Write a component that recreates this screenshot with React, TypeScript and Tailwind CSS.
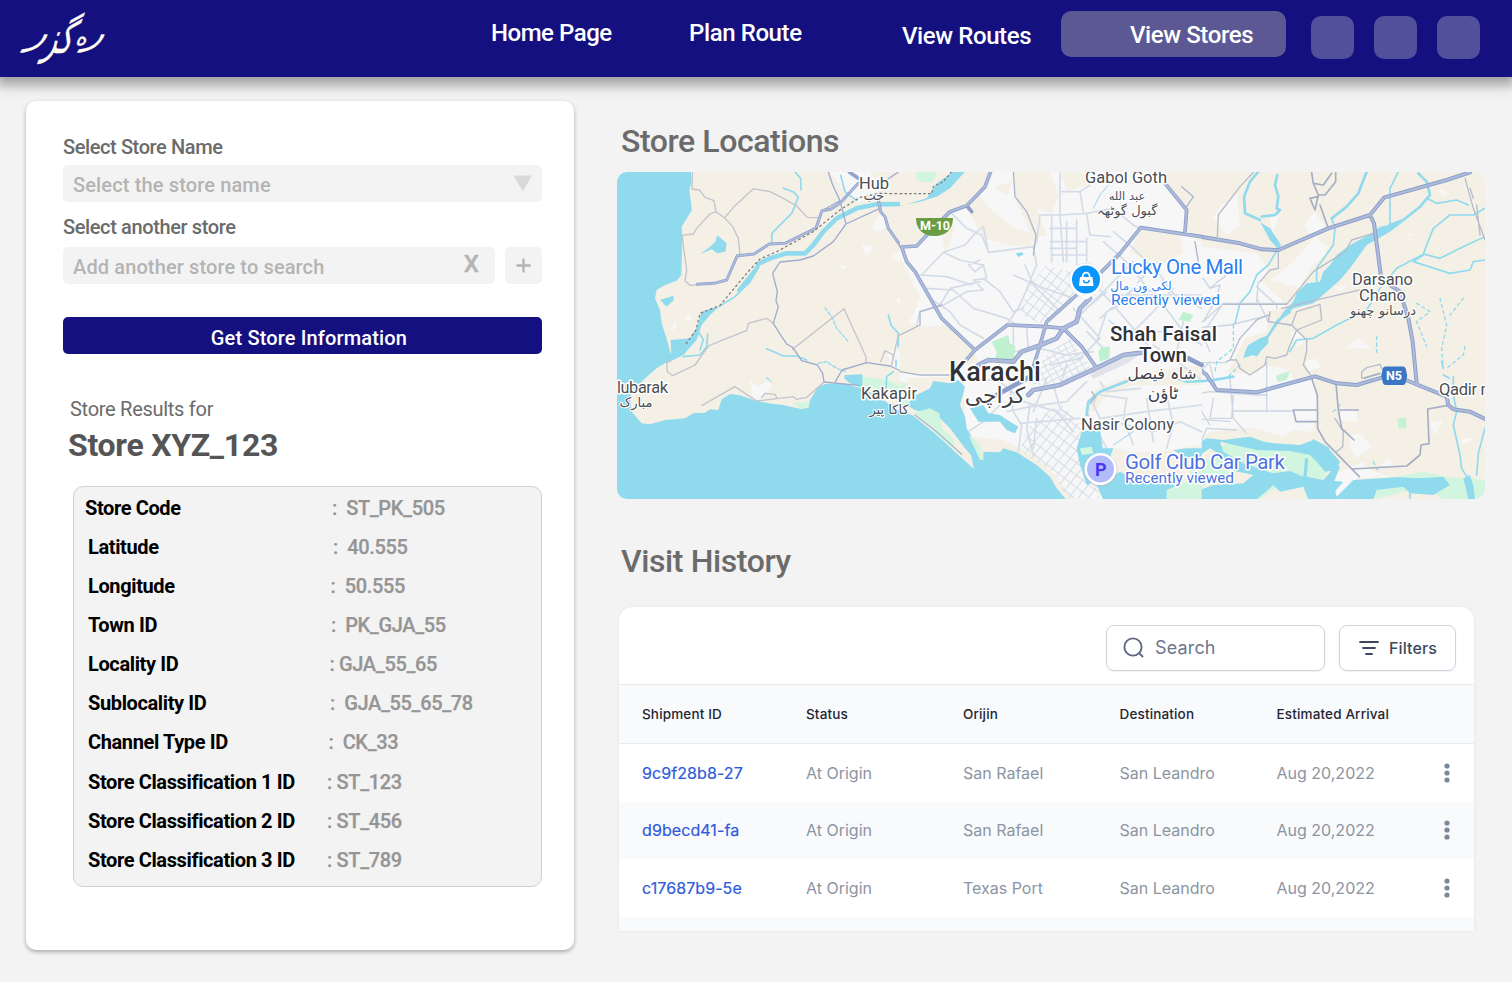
import React from "react";

const details = [
  { label: "Store Code", value: ":  ST_PK_505", pad: "pl-[11px]", at: "w-[258px]" },
  { label: "Latitude", value: ":  40.555", pad: "pl-[14px]", at: "w-[259px]" },
  { label: "Longitude", value: ":  50.555", pad: "pl-[14px]", at: "w-[256.500px]" },
  { label: "Town ID", value: ":  PK_GJA_55", pad: "pl-[14px]", at: "w-[257px]" },
  { label: "Locality ID", value: ": GJA_55_65", pad: "pl-[14px]", at: "w-[255.500px]" },
  { label: "Sublocality ID", value: ":  GJA_55_65_78", pad: "pl-[14px]", at: "w-[256px]" },
  { label: "Channel Type ID", value: ":  CK_33", pad: "pl-[14px]", at: "w-[254.500px]" },
  { label: "Store Classification 1 ID", value: ": ST_123", pad: "pl-[14px]", at: "w-[253px]" },
  { label: "Store Classification 2 ID", value: ": ST_456", pad: "pl-[14px]", at: "w-[253px]" },
  { label: "Store Classification 3 ID", value: ": ST_789", pad: "pl-[14px]", at: "w-[253px]" },
];

const visits = [
  ["9c9f28b8-27", "At Origin", "San Rafael", "San Leandro", "Aug 20,2022"],
  ["d9becd41-fa", "At Origin", "San Rafael", "San Leandro", "Aug 20,2022"],
  ["c17687b9-5e", "At Origin", "Texas Port", "San Leandro", "Aug 20,2022"],
];

const SEA = "#90daee";
const LAND = "#f5f0e5";
const CITY = "#f7f7f8";
const PARK = "#d2f5df";

function Logo() {
  return (
    <svg width="90" height="70" viewBox="0 0 90 70" className="block overflow-visible" fill="#fffdf0">
      <g fontFamily="'DejaVu Sans', sans-serif" fontSize="30" direction="rtl" textAnchor="start" stroke="#fffdf0" strokeWidth="0.300">
        <text transform="translate(79 40) skewX(-34) scale(1.15 1.15)">ر</text>
        <text transform="translate(64 41) skewX(-20) scale(0.72 0.8)">ه</text>
        <text transform="translate(48 49) skewX(-20) scale(0.9 1.5)">گز</text>
        <text transform="translate(22 40) skewX(-34) scale(1.15 1.15)">ر</text>
      </g>
    </svg>
  );
}

function Header() {
  return (
    <header className="relative z-10 flex h-[77px] items-start bg-[#151080] text-[24px] leading-[28px] font-medium tracking-[-0.4px] whitespace-nowrap text-white shadow-[0_4px_12px_4px_rgba(0,0,0,0.36)]">
      <div className="w-[491px] pt-[4px] pl-[22px]">
        <Logo />
      </div>
      <a className="mt-[19px] w-[198px] tracking-[-0.48px]">Home Page</a>
      <a className="mt-[19px] w-[213px]">Plan Route</a>
      <a className="mt-[22px] w-[159px]">View Routes</a>
      <a className="mt-[11px] h-[46px] w-[225px] rounded-[10px] bg-[#5b5893] pt-[10px] pl-[69px]">View Stores</a>
      <div className="mt-[16px] ml-[25px] flex gap-[20px]">
        <span className="size-[43px] rounded-[10px] bg-[#52509b]" />
        <span className="size-[43px] rounded-[10px] bg-[#52509b]" />
        <span className="size-[43px] rounded-[10px] bg-[#52509b]" />
      </div>
    </header>
  );
}

function StorePanel() {
  return (
    <section className="h-[849px] w-[548px] rounded-[10px] bg-white px-[32px] pt-[34px] pl-[37px] shadow-[0_2px_4px_rgba(0,0,0,0.3)]">
      <p className="h-[30px] text-[20px] leading-[24px] font-medium tracking-[-0.4px] text-[#6b6b6b]">Select Store Name</p>
      <div className="flex h-[37px] items-center justify-between rounded-[5px] bg-[#f3f3f3] pt-[2px] pr-[9px] pl-[10px] text-[20px] font-medium tracking-[0.14px] text-[#b4b4b4]">
        <span>Select the store name</span>
        <svg width="20" height="17" viewBox="0 0 20 17" className="mb-[3px]">
          <path d="M0.5 0.5h18.5L9.8 16.5z" fill="#d9d9d9" />
        </svg>
      </div>
      <p className="h-[45px] pt-[13px] text-[20px] leading-[24px] font-medium tracking-[-0.38px] text-[#6b6b6b]">Select another store</p>
      <div className="flex gap-[10px]">
        <div className="flex h-[37px] w-[432px] items-center justify-between rounded-[5px] bg-[#f3f3f3] pt-[2px] pr-[16px] pl-[10px] text-[20px] font-medium tracking-[0.12px] text-[#b4b4b4]">
          <span>Add another store to search</span>
          <span className="mb-[5px] text-[24px] tracking-normal [-webkit-text-stroke:0.4px_#b4b4b4]">X</span>
        </div>
        <div className="flex size-[37px] items-center justify-center rounded-[5px] bg-[#f3f3f3]">
          <svg width="15" height="15" viewBox="0 0 15 15" stroke="#b4b4b4" strokeWidth="2.4">
            <path d="M7.5 0.5v14M0.5 7.5h14" />
          </svg>
        </div>
      </div>
      <button className="mt-[33px] block h-[37px] w-[479px] rounded-[5px] bg-[#151080] pt-[4px] pl-[13px] text-center text-[20px] font-medium tracking-[0.15px] text-white">
        Get Store Information
      </button>
      <p className="mt-[43px] pl-[7px] text-[20px] leading-[24px] tracking-[-0.28px] text-[#6b6b6b]">Store Results for</p>
      <h1 className="mt-[4px] pl-[5px] text-[32px] leading-[40px] font-bold tracking-[-0.28px] text-[#555]">Store XYZ_123</h1>
      <dl className="mt-[21px] ml-[10px] h-[401px] w-[469px] rounded-[10px] border border-[#cfcfcf] bg-[#f3f3f3] pt-[1px] text-[20px] whitespace-pre">
        {details.map((d) => (
          <div key={d.label} className="flex h-[39.15px] items-center">
            <dt className={`${d.at} ${d.pad} shrink-0 font-bold tracking-[-0.38px] text-black`}>{d.label}</dt>
            <dd className="font-medium tracking-[-0.35px] text-[#959595] [-webkit-text-stroke:0.25px_#959595]">{d.value}</dd>
          </div>
        ))}
      </dl>
    </section>
  );
}

function MapWest() {
  return (
    <g transform="translate(610 110) scale(0.33333)" fill="none" strokeLinejoin="round" strokeLinecap="round">
      <path fill={SEA} d="M15 180H242L245 215 238 240 246 300 215 350 217 390 214 495 200 512 165 525 140 540 135 565 150 600 155 640 168 680 182 730 200 730 190 748 172 755 140 775 100 810 60 860 65 905 95 940 120 943 165 930 225 925 250 910 285 908 300 898 325 900 335 868 360 852 390 856 440 873 475 880 520 885 555 893 575 897 595 893 600 870 625 830 645 822 700 820 735 830 760 835 820 870 875 908V1180H15Z" />
      <path fill={CITY} d="M660 186H780L810 240 790 260 740 280 700 240ZM785 355L820 300 835 345 810 365ZM755 402L790 410 775 435 765 430ZM845 440L870 420 900 465 890 475ZM182 665L195 632 203 648ZM222 622L238 610 248 628 235 634ZM688 466L710 465 700 482ZM857 572L875 560 890 574 870 584ZM418 805L440 830 475 812 485 830 450 870 430 865ZM830 730L860 715 900 760V800L850 775ZM870 320L892 322 875 332Z" />
      <path fill={PARK} d="M755 800L830 808 875 830 860 845 755 836ZM545 880L598 875 590 893 572 895Z" />
      <path fill={SEA} d="M270 433L300 410 316 395 322 376 350 400 346 425 322 430 305 418ZM150 570L190 557 192 570 170 590ZM705 795L757 793V833L720 820 702 805ZM182 690L240 685 262 650 275 605 330 588 300 615 275 645 260 690 220 735 185 752ZM380 540L440 465 450 470 420 520 385 548Z" />
      <g stroke={SEA}>
        <path strokeWidth="14" d="M445 462L480 445 530 430 585 430 610 405 640 365 680 325 740 295 800 283 905 282" />
        <path strokeWidth="5" d="M450 460L415 520 375 560 330 588M220 740L270 735 290 710 293 672M262 660L280 690 270 720M555 186L572 205 573 240M520 235L550 245 565 262 545 310 505 350 486 370 485 405M692 196L705 245 740 272M835 615L843 645 865 670 865 710M470 716L520 738 560 738 590 750M828 835L830 800 850 785M858 750V770" />
        <path strokeWidth="4" strokeDasharray="10 6" d="M645 594L665 620 680 655 715 695M625 760L650 755 680 775 705 785M470 803L484 814" />
      </g>
      <g stroke="#c2c3ce" strokeWidth="4">
        <path d="M247 186L246 237M246 237L268 240 285 262 312 272 318 305 345 325 368 350 385 385 390 435M345 322L372 290 430 236 480 245 520 265 560 288 592 322 625 323M318 305L300 312 260 355 250 372 216 376M216 376L230 480 225 512 240 526 262 524M490 640L470 625 415 640 410 662 350 685 295 708 255 765 188 797 172 785 170 758 185 752M275 887L375 830 440 873 550 860M455 862L465 850 495 853 500 862M550 716L702 596 768 740 768 760M548 715L550 720" />
        <path d="M812 755L825 722 850 735 845 765M870 672L900 660M845 765L865 675M550 860L560 868 590 862 640 818" />
      </g>
      <g stroke="#9facce" strokeWidth="4">
        <path d="M655 186L668 225 690 272 708 342 808 296M708 342L670 395 610 438 570 450 510 456 488 490 502 545 498 572 505 590 490 640 515 680 530 702 548 712 575 752 622 765 638 790 642 816M642 816L745 826M676 815L696 780 770 758 840 768 900 795M690 272L640 300M830 210L865 186" />
      </g>
      <g stroke="#91a3cd">
        <path strokeWidth="9" d="M262 523L312 520 350 510 382 437 432 432 478 402 525 400 618 354 636 302 662 298 690 280 745 220M805 270L812 305 825 320 835 355 875 412 890 455 903 472" />
        <path strokeWidth="11" d="M718 186L745 205M875 412L903 410" />
      </g>
      <path stroke="#b1bfdf" strokeWidth="4" d="M262 523L312 520 350 510 382 437 432 432 478 402 525 400 618 354 636 302 662 298 690 280 745 220M805 270L812 305 825 320 835 355 875 412 890 455 903 472" />
      <path stroke="#777" strokeWidth="3.6" strokeDasharray="8 7" strokeLinecap="butt" d="M228 702L258 660 270 610 330 586 410 490 450 447 500 425 610 365 690 300 750 262 810 250 905 252" />
    </g>
  );
}

function MapCentre() {
  return (
    <g transform="translate(900 165) scale(0.33333)" fill="none" strokeLinejoin="round" strokeLinecap="round">
      <path fill={CITY} d="M0 15H905V860H560L610 1002H490L440 900 300 830 200 830 190 650 0 650Z" />
      <path fill={LAND} d="M0 15H270L255 65 200 122 150 140 75 215 50 242H0ZM130 100L165 190 135 270 120 180ZM210 60L270 130 340 190 410 210 390 245 330 240 250 220 200 130ZM340 20H450L475 90 455 145 410 130 440 210 400 220 345 100ZM285 65L335 50 325 90 295 80ZM0 470L80 485 150 480 222 555 235 590 120 625 0 625ZM0 275L45 370 60 395 50 425 20 485 0 480ZM780 20H905V230L860 205 850 130ZM720 195L840 200 850 265 780 300 690 260ZM480 20L570 25 560 60 500 80ZM550 740L590 670 640 650 720 625 905 600V660L700 660 620 690 580 740ZM600 880L650 850 720 870 905 840V905H650ZM20 640L150 635 170 655 60 690ZM215 815L310 825 400 870 470 935 520 1002H490L410 905 310 850 220 840Z" />
      <path fill="#e2e3ea" d="M570 630L590 605 650 580 715 570 690 590 650 610 580 642Z" />
      <path fill="url(#streetsA)" d="M375 380L440 300 540 330 520 400 440 480 360 450ZM380 790L480 710 540 780 560 860 600 1000H500L460 920 360 860Z" />
      <path fill="url(#streetsB)" d="M450 560L510 520 575 610 500 660 400 660 410 610Z" />
      <g stroke="#d3dce7" strokeWidth="5">
        <path d="M65 330L130 262 195 240 230 200 250 185 265 262 400 245 410 230 420 150 480 150 560 145 640 130M130 262L180 285 250 300 260 340 220 345 250 375 200 380 130 420 60 440 50 480M60 330L140 335 215 360M80 370L160 375 220 430 320 460 350 480M90 400L150 440 180 480 250 520M150 140L200 190 245 210 265 260M120 420L150 370 240 350M250 300L225 320 205 300 240 285M250 340L300 380 340 440 370 430M400 245L410 300 360 420 320 480M340 330L420 365 520 400M375 300L400 360 480 440M480 25V150L490 290M455 150V290M500 170V290M530 165V300M560 220V290M450 230H560M455 270H560M450 190H530M450 250H530M485 80L540 80 570 60M540 80L550 140M560 145L570 210 630 215M640 130L700 180 720 190" />
        <path d="M340 480V560L380 555M380 490L385 550M420 550L500 570 580 560M450 600L540 580 590 530 620 440 660 420 700 370 760 380 850 500 905 540M640 200L700 250 780 330 830 400 905 430M610 230L690 300 750 380M560 330L640 420 760 560M520 430L600 520 560 560M700 290L640 350 540 450M760 300L700 370 600 460M820 370L760 440 700 500M650 390H905M640 500H905M850 470L830 560M760 540L900 640M330 670L340 740 365 780 355 860M390 720L380 790 400 870M320 740L390 725 500 710 560 650M340 700L470 740 520 800M460 660L480 730 520 760M360 775L540 760M590 690L580 720 600 760 740 740 905 720M600 690L680 700 670 760 700 840M740 700L760 830M800 690L820 780 800 850M560 740L620 850M640 770L760 800 840 770 905 800M410 760L400 850M240 640L300 650 360 700M300 720L250 770 205 800 220 830M600 650L620 680 720 670M560 500L620 560M500 490L560 430 620 380M440 640L400 740M500 600L480 660" />
      </g>
      <path fill="#bff1d0" d="M275 530L325 510 330 535 347 545 340 585 285 585 290 560ZM595 560L605 545 630 545 628 580 600 590ZM835 465L850 440 880 450 870 470Z" />
      <path fill={SEA} d="M-5 735L40 752 110 810 165 860 222 912 213 870 195 850 150 790 120 760 45 735 20 720 50 690 90 670 100 648 150 655 175 645 195 665 180 720 195 755 200 790 222 835 250 885 250 860 300 862 310 850 350 862 410 900 450 935 470 970 500 1005H-5ZM210 730L250 720 265 745 300 750 330 770 355 785 345 805 320 795 300 770 235 770ZM530 850L545 800 600 790 608 850 640 850 625 890 600 940 560 960 540 900ZM590 960L660 920 720 950 905 965V1005H610ZM-5 125L80 100 110 55 160 20H195L150 70 110 95 60 110 0 122ZM820 855L860 850 905 850V880L850 875ZM0 690L15 675 0 670ZM347 265L365 262 372 268 355 276Z" />
      <path fill={PARK} d="M50 20H110L100 50 65 52 48 40ZM45 742L90 730 118 745 125 790 165 825 155 850 110 810ZM540 850L575 845 580 865 545 870ZM205 810L240 840 250 885 240 885ZM0 650L20 660 10 690 45 680 20 725 0 720ZM800 975L905 930V1002H800Z" />
      <g stroke={SEA} strokeWidth="8">
        <path d="M560 750L565 710 600 680 690 645 760 640M830 640L860 650 905 648" />
        <path strokeWidth="3" d="M580 130L600 90 625 60M625 465L645 480M640 840L700 800" />
      </g>
      <g stroke="#acb6cc" strokeWidth="4">
        <path d="M340 20L345 95 380 140 408 210 400 270M0 510L60 480 60 440 125 420M0 620L60 630 170 630M575 680L585 695 572 715M885 230L895 290M845 65L880 95 858 128M45 750L110 800 185 868" />
      </g>
      <g stroke="#8c9fca" strokeWidth="11">
        <path d="M272 20L255 65 200 122 150 140 100 190 50 243 5 246M5 246L20 290 45 320 125 460 225 555M195 590L225 555 322 480 440 485 490 490M400 605L420 540 440 470 530 390M605 320L660 265 722 188 905 215M795 55L860 135 855 200M490 490L545 545 587 605M200 122L215 140" />
        <path strokeWidth="14" d="M235 600L265 585 340 590 365 560 415 543 470 520 490 490 530 470 540 430 570 400M290 690L390 635M385 690L400 675 480 660 587 610 670 570 725 563M865 580L905 600" />
      </g>
      <g stroke="#aebbdb" strokeWidth="6">
        <path d="M272 20L255 65 200 122 150 140 100 190 50 243 5 246M5 246L20 290 45 320 125 460 225 555M195 590L225 555 322 480 440 485 490 490M400 605L420 540 440 470 530 390M605 320L660 265 722 188 905 215M795 55L860 135 855 200M490 490L545 545 587 605" />
        <path strokeWidth="9" d="M235 600L265 585 340 590 365 560 415 543 470 520 490 490 530 470 540 430 570 400M385 690L400 675 480 660 587 610 670 570 725 563" />
      </g>
      <path stroke="#777" strokeWidth="3.6" strokeDasharray="7 7" strokeLinecap="butt" d="M0 86H95L100 65 130 50 155 20" />
    </g>
  );
}

function MapEast() {
  return (
    <g transform="translate(1190 165) scale(0.33333)" fill="none" strokeLinejoin="round" strokeLinecap="round">
      <path fill={CITY} d="M0 240L200 265 235 315 215 350 270 400 290 425 235 440 230 500 165 520 130 590 110 625 200 625 225 600 300 615 310 650 370 635 385 700 380 760 365 800 310 795 280 815 190 790 150 790 60 800 0 850ZM70 160L95 120 140 85 150 180 110 210ZM310 290L380 210 410 265 360 310 330 370 240 345ZM345 180L375 140 410 195 360 210ZM470 550L505 518 545 552ZM480 810L510 805 545 845 500 880 480 850ZM345 590L375 580 395 605 355 620ZM300 500L330 500 345 530 320 545ZM430 930L520 890 540 915 600 935 500 940 440 995ZM395 235L420 250 390 262ZM750 70L780 85 755 95ZM720 775L760 765 735 810ZM430 365L475 360 450 380ZM815 820H848L840 832 815 835ZM570 900L600 880 605 910ZM650 205L670 208 660 215ZM455 730L500 735 500 770 450 765ZM240 160L265 150 250 210Z" />
      <g stroke="#ccd6e2" strokeWidth="4">
        <path d="M0 350L40 340 60 370 90 345 105 335 100 310 60 300M60 370L90 360 80 400 40 470M100 415L0 560M0 490L120 480 240 450M0 470H40L100 415H290M20 470L60 560M0 530L80 500M0 593H110M60 600L80 680M120 640L130 760 170 805M0 690L60 680 200 690 230 690V740M125 738H310M130 690L125 760 60 760 70 700M0 760L120 770M20 860L50 790 140 795M200 400L235 470M200 365L260 420 260 430M230 590V740M205 350L200 410M0 650L60 590M10 700L60 780M235 470L300 480" />
      </g>
      <path fill={PARK} d="M90 850L130 820 180 815 250 835 330 840 410 845 430 890 400 940 340 950 250 930 160 900 120 880ZM160 960L200 930 320 925 210 1002H180ZM0 900L90 870 120 930 0 980ZM560 945L700 920 770 935 885 945V1002H760L700 965 560 1002H530ZM440 1002L490 985 530 1002Z" />
      <path fill={SEA} d="M50 820L100 825 180 815 220 830 250 835 330 840 370 825 415 850 450 890 440 915 405 920 380 890 360 870 300 858 200 855 90 830 100 860 160 895 250 925 300 918 340 935 345 880 355 880 350 935 400 945 460 950 430 985 400 1003H355L340 965 270 980 250 960 200 1003H0V985L70 960 160 955 190 930 120 915 100 875 60 850 0 890V850ZM400 945L440 900 450 905 430 955 440 995 490 945 620 937 690 940 760 935 780 960 730 990 660 985 640 965 560 975 550 1003H400ZM215 175L240 190 270 235 262 250 240 225 210 170ZM160 580L165 560 175 540 210 520 235 510 235 535 215 555 200 575 190 570ZM245 500L280 440 310 410 320 385 350 355 390 350 400 320 420 300 440 270 480 240 545 205 570 185 620 175 640 170 600 200 530 240 480 310 450 345 410 380 370 415 310 430 285 450ZM820 940L840 930 850 960 855 1002H835Z" />
      <path fill="#c4f2d3" d="M623 760L648 758 650 790H624ZM258 632L300 617 290 645 262 650ZM0 445L8 470 0 475Z" />
      <g stroke={SEA}>
        <path strokeWidth="8" d="M205 20L180 50 162 95 165 145 210 165M262 30L255 60 265 95 260 130 270 135 255 150 215 155M530 20L505 85 470 125 425 160M600 180L640 165 690 125 720 90 710 50 685 25M525 225L560 205 610 185M0 652L70 645 130 635M230 520L265 465 300 440" />
        <path strokeWidth="5" d="M425 160L435 190 430 240 380 310 380 350M270 240L235 300 200 330 180 380 150 415 135 475M600 180V70L625 20M300 560L320 525 370 520 440 480 530 435 570 370 620 310 700 268 710 240 730 190 780 150 850 150 885 130M705 268L750 280 830 240 885 215M700 270L670 290 780 325 840 315 850 290 885 285M790 635L790 690 800 740 790 780 810 870 815 910 840 950M885 790L865 865 860 930M710 100L740 115 800 105 835 120M760 610L755 590M370 825L415 850M660 985V1003M760 630L778 640" />
        <path strokeWidth="4" strokeDasharray="9 10" d="M750 400L770 480 755 550 760 610M820 400L780 450M680 415L720 440 680 470 710 545M825 545L820 570 770 610M130 480V550L80 590 75 620M560 515V570M430 740L450 720M550 890L565 920M150 600L110 640" />
      </g>
      <path stroke="#b5bccb" strokeWidth="4" d="M190 22L150 65 85 150 82 215M265 258V310L240 315 210 350M290 418L370 320 465 260 485 225 550 205M290 418H100M275 430L400 400 530 370M305 480L320 440 390 418 395 465 320 495 305 480 235 470 240 440M320 495L300 540 290 570 255 580 230 575 225 600 180 630 150 610 140 585H120L150 520 200 465 235 450M320 495L350 525 350 560 340 600 365 635M120 585L110 590M825 40L850 130 885 225M860 120L870 210M850 100L840 70M515 640V620L530 608 570 598 580 620M0 85L8 95 0 105M435 760L460 800 458 845 440 860" />
      <path stroke="#a4aec4" strokeWidth="5" d="M22 220L18 270 5 300M365 640L382 690 383 790 405 830 508 935M438 655L445 735 455 790 492 825M450 735H505M310 735H383M318 770H383M310 735L318 770M485 912L650 903 690 870 693 840 717 836 713 732 770 722M520 640L570 625M415 190L390 120M365 22L370 55 385 90 375 135M437 22V50L405 90 385 90M370 55L400 60 425 25M375 135L360 100 385 95" />
      <path stroke="#8c9fca" strokeWidth="12" d="M0 210L150 235 215 253 265 255 415 190 540 150 582 98 770 45 840 22M540 150L552 175 575 350M600 360L630 380 655 460 668 530 680 655M0 590L50 630 80 675 200 682 375 634 440 655 500 660 575 638M640 642L770 695 775 720 790 733 840 740 885 762" />
      <path stroke="#aebbdb" strokeWidth="6" d="M0 210L150 235 215 253 265 255 415 190 540 150 582 98 770 45 840 22M540 150L552 175 575 350M600 360L630 380 655 460 668 530 680 655M0 590L50 630 80 675 200 682 375 634 440 655 500 660 575 638M640 642L770 695 775 720 790 733 840 740 885 762" />
    </g>
  );
}

function MapLabels() {
  return (
    <g fontFamily="Roboto, 'DejaVu Sans', sans-serif" stroke="#ffffff" strokeWidth="3" strokeLinejoin="round" paintOrder="stroke" fill="#4b4e53">
      <g fontSize="16.500">
        <text x="859" y="189" textLength="30">Hub</text>
        <text x="617" y="393" textLength="51">lubarak</text>
        <text x="861" y="399" textLength="56">Kakapir</text>
        <text x="1085" y="183" textLength="82">Gabol Goth</text>
        <text x="1081" y="430" textLength="93">Nasir Colony</text>
        <text x="1352" y="285" textLength="61">Darsano</text>
        <text x="1359" y="301" textLength="47">Chano</text>
        <text x="1439" y="395" letterSpacing="-0.300">Qadir nagar</text>
      </g>
      <g fontSize="13" fontFamily="'DejaVu Sans', sans-serif" strokeWidth="2">
        <text x="874" y="200" textAnchor="middle">حب</text>
        <text x="636" y="407" textAnchor="middle">مبارک</text>
        <text x="889" y="414" textAnchor="middle">کاکا پیر</text>
        <text x="1127" y="200" textAnchor="middle" fontSize="11.500">عبد الله</text>
        <text x="1127" y="215" textAnchor="middle">گبول گوٹھہ</text>
        <text x="1383" y="315" textAnchor="middle">درسانو چھنو</text>
      </g>
      <g fontWeight="500" fill="#303236">
        <text x="949" y="381" fontSize="27" textLength="92">Karachi</text>
        <text x="1110" y="341" fontSize="20.500" textLength="107">Shah Faisal</text>
        <text x="1139" y="362" fontSize="20.500" textLength="48">Town</text>
      </g>
      <g fontFamily="'DejaVu Sans', sans-serif" fill="#404247">
        <text x="995" y="403" fontSize="22" textAnchor="middle">کراچی</text>
        <text x="1162" y="379" fontSize="15.500" textAnchor="middle">شاہ فیصل</text>
        <text x="1163" y="399" fontSize="17" textAnchor="middle">ٹاؤن</text>
      </g>
      <g fill="#2a80ee">
        <text x="1111" y="273.500" fontSize="20.500" textLength="132">Lucky One Mall</text>
        <text x="1141" y="290" fontSize="12" fontFamily="'DejaVu Sans', sans-serif" textAnchor="middle">لکی ون مال</text>
        <text x="1111" y="305" fontSize="15.500" textLength="109">Recently viewed</text>
      </g>
      <g fill="#4d71e0">
        <text x="1125" y="469" fontSize="20.500" textLength="160">Golf Club Car Park</text>
        <text x="1125" y="483" fontSize="15.500" textLength="109">Recently viewed</text>
      </g>
      <g stroke="none">
        <path d="M1086 263.500C1076.500 263.500 1069.500 271 1069.500 280C1069.500 288 1075 294 1081 297Q1085.500 301.500 1090 297C1097 294 1102.500 288 1102.500 280C1102.500 271 1095.500 263.500 1086 263.500Z" fill="#fff" stroke="#9aa3b5" strokeOpacity="0.35" strokeWidth="1" />
        <circle cx="1086" cy="279.500" r="14" fill="#0a95fb" />
        <path d="M1080 277h12.500l1 9h-14.500z" fill="#fff" />
        <path d="M1082.800 277.500v-1.500a3.400 3.400 0 0 1 6.800 0v1.500" fill="none" stroke="#fff" strokeWidth="1.700" />
        <path d="M1083.500 280a2.800 2.800 0 0 0 5.600 0" fill="none" stroke="#0a95fb" strokeWidth="1.400" />
        <circle cx="1100.500" cy="470" r="17" fill="#b5bccb" opacity="0.5" />
        <circle cx="1100.500" cy="469" r="16" fill="#fff" />
        <circle cx="1100.500" cy="469" r="13.500" fill="#b3bcfb" />
        <text x="1095" y="475.500" fontSize="18" fontWeight="700" fill="#4d35f0">P</text>
        <path d="M916 218h37c0 11-7 18-18.500 18S916 229 916 218z" fill="#6a9d42" />
        <text x="920" y="230" fontSize="12.500" fontWeight="700" fill="#fff" textLength="30">M-10</text>
        <path d="M1385.500 366.500h17.500q2 0 2.600 1.800l1.400 6.200q.3 1.300 0 2.600l-1.400 6q-.6 2-2.600 2h-17.500q-2 0-2.600-2l-1.400-6q-.3-1.300 0-2.600l1.400-6.200q.6-1.800 2.600-1.800z" fill="#3b76c5" />
        <text x="1386" y="380" fontSize="12.500" fontWeight="700" fill="#fff" textLength="16">N5</text>
      </g>
    </g>
  );
}

function StoreMap() {
  return (
    <svg width="868" height="327" viewBox="617 172 868 327" className="block rounded-[10px] bg-[#f5f0e5]">
      <defs>
        <pattern id="streetsA" width="23" height="29" patternUnits="userSpaceOnUse" patternTransform="rotate(38)">
          <path d="M0 0H23M0 0V29" stroke="#d3dce7" strokeWidth="6" fill="none" />
        </pattern>
        <pattern id="streetsB" width="20" height="16" patternUnits="userSpaceOnUse" patternTransform="rotate(-28)">
          <path d="M0 0H20M0 0V16" stroke="#d3dce7" strokeWidth="5" fill="none" />
        </pattern>
      </defs>
      <MapWest />
      <MapEast />
      <MapCentre />
      <MapLabels />
    </svg>
  );
}

function VisitTable() {
  const cols = "grid grid-cols-[164px_157px_156.500px_157px_157px_1fr] items-center pl-[23px]";
  return (
    <div className="h-[324px] w-[855px] overflow-hidden rounded-t-[14px] bg-white font-[Inter,sans-serif] shadow-[0_0_3px_rgba(200,208,220,0.4)]">
      <div className="flex h-[77px] items-center justify-end gap-[14px] pt-[4px] pr-[18px]">
        <div className="flex h-[46px] w-[219px] items-center rounded-[8px] border border-[#cdd2dd] pl-[16px] text-[18px] tracking-[0.15px] text-[#6c768a] shadow-[0_1px_2px_rgba(16,24,40,0.06)]">
          <svg width="22" height="22" viewBox="0 0 22 22" fill="none" stroke="#5d6880" strokeWidth="1.900" strokeLinecap="round">
            <circle cx="10" cy="10" r="8.600" />
            <path d="M16.100 16.100L19.500 19.500" />
          </svg>
          <span className="ml-[10px]">Search</span>
        </div>
        <div className="flex h-[46px] w-[117px] items-center rounded-[8px] border border-[#cdd2dd] pl-[19px] text-[16px] font-medium text-[#3d475c] shadow-[0_1px_2px_rgba(16,24,40,0.06)]">
          <svg width="20" height="14" viewBox="0 0 20 14" fill="none" stroke="#3d475c" strokeWidth="1.800" strokeLinecap="round">
            <path d="M1 1h18M4 7h12M7 13h6" />
          </svg>
          <span className="ml-[10px] tracking-[0.1px]">Filters</span>
        </div>
      </div>
      <div className={`${cols} h-[60px] border-y border-[#e9ebef] bg-[#f9fafc] text-[13.500px] font-medium tracking-[0.15px] text-[#222734]`}>
        <span>Shipment ID</span>
        <span>Status</span>
        <span>Orijin</span>
        <span>Destination</span>
        <span>Estimated Arrival</span>
      </div>
      {visits.map((row) => (
        <div key={row[0]} className={`${cols} h-[57.500px] text-[16px] text-[#8b95a3] odd:bg-white even:bg-[#f9fafc]`}>
          <span className="tracking-[0.08px] text-[#2f5bdc] [-webkit-text-stroke:0.2px_#2f5bdc]">{row[0]}</span>
          <span>{row[1]}</span>
          <span>{row[2]}</span>
          <span>{row[3]}</span>
          <span>{row[4]}</span>
          <svg width="6" height="20" viewBox="0 0 6 20" fill="#7d8896" className="ml-[10px]">
            <circle cx="3" cy="3" r="2.600" />
            <circle cx="3" cy="10" r="2.600" />
            <circle cx="3" cy="17" r="2.600" />
          </svg>
        </div>
      ))}
      <div className="h-[20px] bg-[#f9fafc]" />
    </div>
  );
}

export default function App() {
  return (
    <div className="h-[982px] w-[1512px] overflow-hidden bg-[#f3f3f3] font-[Roboto,sans-serif]">
      <Header />
      <main className="flex gap-[43px] pt-[24px] pl-[26px]">
        <StorePanel />
        <section className="pt-[20px]">
          <h2 className="pl-[4px] text-[32px] leading-[40px] font-medium tracking-[-0.43px] text-[#6b6b6b]">Store Locations</h2>
          <div className="mt-[11px]">
            <StoreMap />
          </div>
          <h2 className="mt-[42px] pl-[4px] text-[32px] leading-[40px] font-medium tracking-[-0.4px] text-[#6b6b6b]">Visit History</h2>
          <div className="mt-[26px] ml-[2px]">
            <VisitTable />
          </div>
        </section>
      </main>
    </div>
  );
}
